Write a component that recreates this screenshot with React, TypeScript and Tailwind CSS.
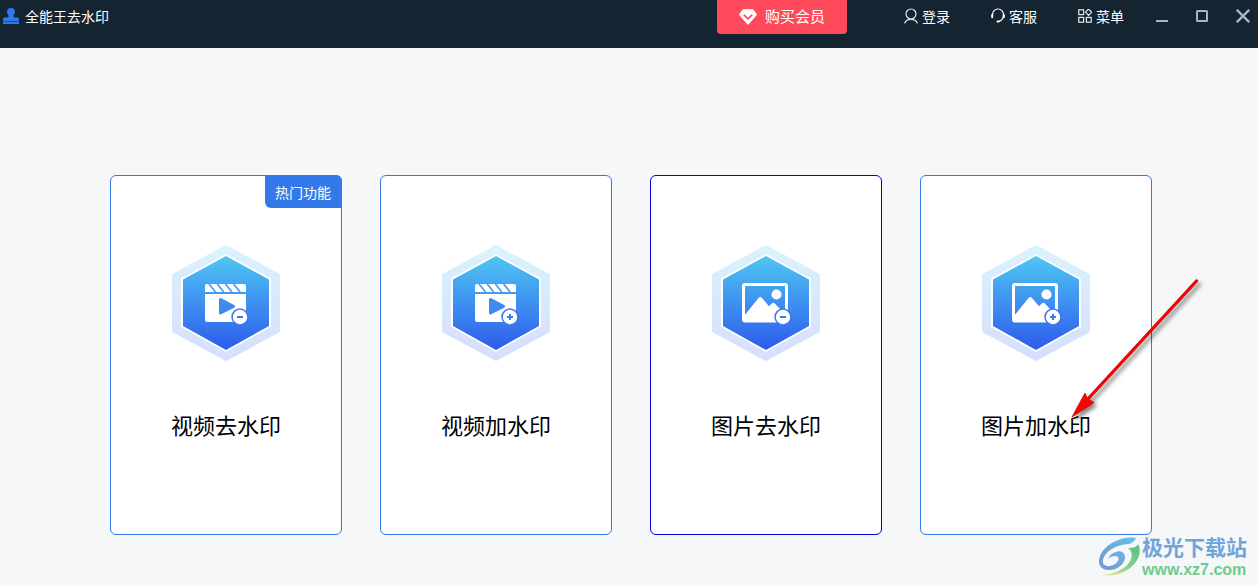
import type { ReactNode } from 'react';

type Badge = 'plus' | 'minus';
type Kind = 'video' | 'image';

interface Feature {
  title: string;
  kind: Kind;
  badge: Badge;
  hot?: boolean;
  active?: boolean;
  pointed?: boolean;
}

const features: Feature[] = [
  { title: '视频去水印', kind: 'video', badge: 'minus', hot: true },
  { title: '视频加水印', kind: 'video', badge: 'plus' },
  { title: '图片去水印', kind: 'image', badge: 'minus', active: true },
  { title: '图片加水印', kind: 'image', badge: 'plus', pointed: true },
];

function StampIcon() {
  return (
    <svg width="16" height="16" viewBox="0 0 16 16" fill="#3278e8" aria-hidden="true">
      <path d="M8 0a4 4 0 0 1 4 4c0 1.500-1.500 2.500-1.500 4.200 0 .9.600 1.300 1.500 1.300h2c1.200 0 2 .7 2 1.700V13H0v-1.800c0-1 .8-1.700 2-1.700h2c.9 0 1.500-.4 1.500-1.300C5.500 6.500 4 5.500 4 4a4 4 0 0 1 4-4z" />
      <path d="M0 14h16v2H0z" />
      <path d="M0 13h16v1H0z" opacity=".45" />
    </svg>
  );
}

function DiamondIcon() {
  return (
    <svg width="18" height="16" viewBox="0 0 18 16" aria-hidden="true">
      <path d="M4.200.8h9.600L17.300 5.600 9 15 .7 5.600z" fill="#fff" stroke="#fff" strokeWidth="1.200" strokeLinejoin="round" />
      <path d="M5.200 6.200 9 9.800l3.800-3.600" fill="none" stroke="#ff4a5c" strokeWidth="1.700" strokeLinecap="round" strokeLinejoin="round" />
    </svg>
  );
}

function UserIcon() {
  return (
    <svg width="14" height="16" viewBox="0 0 14 16" fill="none" stroke="#e4e8ec" strokeWidth="1.200" strokeLinecap="round" aria-hidden="true">
      <circle cx="7" cy="6" r="5" />
      <path d="M.8 15c.8-2.200 3.200-3.700 6.200-3.700s5.400 1.500 6.200 3.700" />
    </svg>
  );
}

function HeadsetIcon() {
  return (
    <svg width="14" height="16" viewBox="0 0 14 16" fill="none" stroke="#fff" strokeLinecap="round" aria-hidden="true">
      <path d="M1.500 7V6.500a5.500 5.500 0 0 1 11 0c0 3.500-1.500 6-4.500 6.900" strokeWidth="1.200" />
      <path d="M1.200 7v2.200M12.800 7v2.200" strokeWidth="2" />
      <path d="M6.600 13.500h1" strokeWidth="2.200" />
    </svg>
  );
}

function GridIcon() {
  return (
    <svg width="14" height="14" viewBox="0 0 14 14" fill="none" stroke="#e4e8ec" strokeWidth="1.200" aria-hidden="true">
      <rect x=".8" y=".8" width="4.800" height="4.800" />
      <path d="M10.600 0 13.700 3.200l-3.100 3.200-3.100-3.200z" />
      <rect x=".8" y="8.400" width="4.800" height="4.800" />
      <rect x="8.400" y="8.400" width="4.800" height="4.800" />
    </svg>
  );
}

function NavButton({ icon, label }: { icon: ReactNode; label: string }) {
  return (
    <button type="button" className="flex items-center gap-1 text-sm leading-5 text-white">
      {icon}
      <span className="pt-0.5">{label}</span>
    </button>
  );
}

function WindowControls() {
  return (
    <div className="flex h-8 items-center gap-7 pr-2">
      <button type="button" aria-label="最小化">
        <svg width="12" height="12" viewBox="0 0 12 12" fill="#aab4c4">
          <path d="M0 10h12v2H0z" />
        </svg>
      </button>
      <button type="button" aria-label="最大化">
        <svg width="12" height="12" viewBox="0 0 12 12" fill="none" stroke="#aab4c4" strokeWidth="2">
          <rect x="1" y="1" width="10" height="10" rx=".5" />
        </svg>
      </button>
      <button type="button" aria-label="关闭">
        <svg width="14" height="14" viewBox="0 0 14 14" fill="none" stroke="#aab4c4" strokeWidth="2.400">
          <path d="M.8.8l12.400 12.400M13.200.8.8 13.200" />
        </svg>
      </button>
    </div>
  );
}

// Round plus/minus marker in the lower right of a feature icon
function BadgeMark({ cx, cy, badge }: { cx: number; cy: number; badge: Badge }) {
  return (
    <g>
      <circle cx={cx} cy={cy} r="8.700" fill="#3d78ee" />
      <circle cx={cx} cy={cy} r="7.200" fill="#fff" />
      <path
        d={badge === 'plus' ? `M${cx - 3} ${cy}h6M${cx} ${cy - 3}v6` : `M${cx - 3} ${cy}h6`}
        stroke="#3d78ee"
        strokeWidth="2"
      />
    </g>
  );
}

function FeatureIcon({ kind, badge, id }: { kind: Kind; badge: Badge; id: string }) {
  return (
    <svg width="108" height="116" viewBox="0 0 108 116" aria-hidden="true">
      <defs>
        <linearGradient id={`${id}-outer`} x1="0" y1="0" x2="0" y2="1">
          <stop offset="0" stopColor="#daf3fc" />
          <stop offset="1" stopColor="#d6defc" />
        </linearGradient>
        <linearGradient id={`${id}-inner`} x1="0" y1="0" x2="0" y2="1">
          <stop offset="0" stopColor="#4fc6f3" />
          <stop offset="1" stopColor="#2d5bec" />
        </linearGradient>
      </defs>
      <path d="M54 0l54 29v58l-54 29L0 87V29z" fill={`url(#${id}-outer)`} />
      <path d="M54 9l45 24.500v48.500L54 107 9 82V33.500z" fill="#fff" />
      <path d="M54 11l43 23.500v46.500L54 105 11 81V34.500z" fill={`url(#${id}-inner)`} />
      {kind === 'video' ? (
        <g>
          <path d="M35 39h37a2 2 0 0 1 2 2v6H33v-6a2 2 0 0 1 2-2z" fill="#fff" />
          <path d="M37 39l6.500 8M45.200 39l6.500 8M53.400 39l6.500 8M61.600 39l6.500 8" stroke="#46a2f1" strokeWidth="1.800" />
          <path d="M33 49h41v26a2 2 0 0 1-2 2H35a2 2 0 0 1-2-2z" fill="#fff" />
          <path d="M48.500 54.500v13.500l13-6.700z" fill="#408aef" stroke="#408aef" strokeWidth="3" strokeLinejoin="round" />
          <BadgeMark cx={68} cy={72} badge={badge} />
        </g>
      ) : (
        <g>
          <rect x="31.500" y="39.500" width="43" height="36.500" rx="1.500" fill="none" stroke="#fff" strokeWidth="3" />
          <circle cx="64.500" cy="49.500" r="5" fill="#fff" />
          <path d="M32 71l14.500-18c1.200-1.500 2.300-1.500 3.500 0l7 8.200 2.800-2.700c1-.9 2-.9 3 0L70 66v10H32z" fill="#fff" />
          <BadgeMark cx={71} cy={72} badge={badge} />
        </g>
      )}
    </svg>
  );
}

function PointerArrow() {
  return (
    <svg
      className="pointer-events-none absolute top-[99px] left-[146px] z-10 drop-shadow-[3px_3px_2px_rgba(0,0,0,0.5)]"
      width="140"
      height="150"
      viewBox="0 0 140 150"
      aria-hidden="true"
    >
      <path d="M130.500 7L21 126" stroke="#b01010" strokeWidth="3.200" strokeLinecap="round" />
      <path d="M130.500 7L21 126" stroke="#f00" strokeWidth="2.400" strokeLinecap="round" />
      <path d="M6 143l13-24 2.500 6 6.500 3.500z" fill="#f00" stroke="#d00" strokeWidth=".8" strokeLinejoin="round" />
    </svg>
  );
}

function FeatureCard({ feature, id }: { feature: Feature; id: string }) {
  const { title, kind, badge, hot, active, pointed } = feature;

  return (
    <div className="relative">
      <button
        type="button"
        className={`flex h-[360px] w-full flex-col items-center rounded-md border bg-white pt-[69px] ${
          active ? 'border-[#0000e0]' : 'border-[#3379e6]'
        }`}
      >
        <FeatureIcon kind={kind} badge={badge} id={id} />
        <span className="mt-[50px] text-[22px] leading-8 text-black">{title}</span>
      </button>
      {hot && (
        <span className="absolute top-0 right-0 flex h-[33px] items-center rounded-tr-md rounded-bl-md bg-[#3379e9] pt-0.5 pr-[11px] pl-[10px] text-sm leading-5 text-white">
          热门功能
        </span>
      )}
      {pointed && <PointerArrow />}
    </div>
  );
}

function SiteMark() {
  return (
    <div className="absolute right-[11px] bottom-[6px] flex items-center gap-0.5">
      <svg width="42" height="42" viewBox="0 0 42 42" aria-hidden="true">
        <defs>
          <linearGradient id="swirl-blue" x1="1" y1="0" x2="0" y2="1">
            <stop offset="0" stopColor="#62c0ea" />
            <stop offset="1" stopColor="#7b97d0" />
          </linearGradient>
          <linearGradient id="swirl-green" x1="1" y1="0" x2="0" y2="1">
            <stop offset="0" stopColor="#52c184" />
            <stop offset=".5" stopColor="#83d08c" />
            <stop offset="1" stopColor="#f4f08a" />
          </linearGradient>
        </defs>
        <path
          d="M38 1C26-1 11 5 4 15-1 23 0 32 9 33c9 1 17-5 18-12 .5-5-4-8-9-6-4 1-7 4-8 7 3-3 8-4 10-2 2 3-2 8-8 9-6 1-9-3-6-9C10 12 22 7 31 7c3-1 6-3 7-6z"
          fill="url(#swirl-blue)"
        />
        <path
          d="M30 11c5 0 9-1 10-4 3 5 2 13-3 19-7 9-20 14-33 12 11-1 21-5 26-11 5-6 5-12 0-16z"
          fill="url(#swirl-green)"
        />
      </svg>
      <div className="flex flex-col font-bold">
        <span className="text-[21px] leading-6 text-[#70a4da]">极光下载站</span>
        <a href="#" className="font-['Liberation_Sans'] text-base leading-5 text-[#6dcb8f]">
          www.xz7.com
        </a>
      </div>
    </div>
  );
}

export default function App() {
  return (
    <div className="relative flex min-h-screen flex-col bg-[#f5f7f9] font-['Liberation_Sans','Noto_Sans_CJK_SC',sans-serif]">
      <header className="flex h-12 items-start justify-between bg-[#152431]">
        <h1 className="flex h-8 items-center gap-1.5 pl-[3px] text-sm leading-5 text-white">
          <StampIcon />
          <span className="pt-0.5">全能王去水印</span>
        </h1>
        <div className="flex items-start">
          <button
            type="button"
            className="mr-[57px] flex h-[34px] w-[130px] items-center justify-center gap-2 rounded-b bg-[#ff4a5c] text-[15px] leading-5 text-white"
          >
            <DiamondIcon />
            购买会员
          </button>
          <nav className="mr-8 flex h-8 items-center gap-[41px]">
            <NavButton icon={<UserIcon />} label="登录" />
            <NavButton icon={<HeadsetIcon />} label="客服" />
            <NavButton icon={<GridIcon />} label="菜单" />
          </nav>
          <WindowControls />
        </div>
      </header>

      <main className="grid grid-cols-4 gap-[38px] pt-[127px] pr-[106px] pl-[110px]">
        {features.map((feature, i) => (
          <FeatureCard key={feature.title} feature={feature} id={`feature-${i}`} />
        ))}
      </main>

      <SiteMark />
    </div>
  );
}
